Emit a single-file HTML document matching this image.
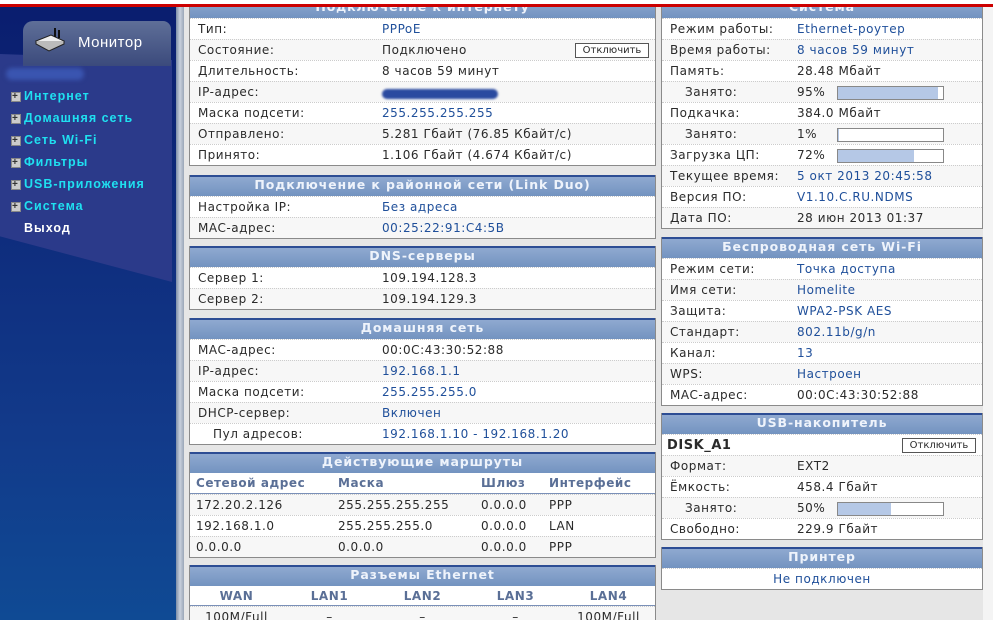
<!DOCTYPE html>
<html><head><meta charset="utf-8"><style>
*{margin:0;padding:0;box-sizing:border-box}
html,body{width:993px;height:620px;overflow:hidden}
body{background:#e6e6e6;font-family:"DejaVu Sans","Liberation Sans",sans-serif;font-size:12px;letter-spacing:.55px;color:#2a2a2a;position:relative}
.side{position:absolute;left:0;top:0;width:176px;height:620px;background:linear-gradient(#0a1d6e,#123a8a 70%,#0f4a94)}
.strip{position:absolute;left:176px;top:0;width:8px;height:620px;background:linear-gradient(90deg,#7d8ea8,#c8d0dc,#9aa6b8)}
.red{position:absolute;left:0;top:0;width:993px;height:7px;background:linear-gradient(#fff 0,#fff 4px,#c00 4px,#c00 7px)}
.tab{position:absolute;left:23px;top:21px;width:148px;height:45px;border-radius:10px 8px 0 0;background:linear-gradient(#5f6f98,#3b4a7c);color:#fff;font:15px "Liberation Sans",sans-serif;letter-spacing:.5px}
.panel{position:absolute;left:0;top:54px;width:172px;height:228px;background:#2b3a8a;border-radius:0 4px 0 0;clip-path:polygon(0 0,100% 6px,100% 100%,0 80%)}
.menu{position:absolute;left:10px;top:88px;font:bold 12.5px "Liberation Sans",sans-serif;letter-spacing:1px;color:#1fe0f0}
.menu div{height:22px;line-height:16px;position:relative;padding-left:14px}
.menu div:before{content:"";position:absolute;left:1px;top:4px;width:8px;height:8px;background:#ccc;border:1px solid #888}
.menu div:after{content:"+";position:absolute;left:2px;top:1px;color:#333;font-size:10px;letter-spacing:0}
.menu .x{color:#fff}.menu .x:before,.menu .x:after{display:none}
.box{position:absolute;background:#fff;border:1px solid #8a8a8a;border-top:none}
.h{height:21px;background:linear-gradient(#2d4d94 0,#2d4d94 2px,#8fa9d0 2px,#7393c0);color:#eef3fb;font-weight:bold;font-size:12.5px;text-align:center;line-height:20px;letter-spacing:.9px}
.r{height:21px;line-height:21px;border-top:1px dotted #ccc;position:relative;padding-left:8px;white-space:nowrap}
.r:nth-child(odd){background:#f7f7f7}
.r span{position:absolute}
.b{color:#1f4f9a}
.bar{position:absolute;width:107px;height:14px;top:4px;border:1px solid #888;background:#fff}
.bar i{display:block;height:100%;background:#b5c8e6}
.btn{position:absolute;right:6px;top:3px;width:74px;height:15px;border:1px solid #555;background:#fff;font-size:10px;letter-spacing:0;text-align:center;line-height:13px}
.th{color:#5a6f96;font-weight:bold;border-bottom:1px solid #7a90b8}
</style></head><body>
<div class="side"></div>
<div class="panel"></div>
<div class="tab"><svg style="position:absolute;left:10px;top:6px" width="34" height="26" viewBox="0 0 34 26"><path d="M3 14 L18 8 L31 14 L16 21 Z" fill="#eee" stroke="#222"/><path d="M3 14 L3 17 L16 24 L31 17 L31 14" fill="#bbb" stroke="#222"/><path d="M22 10 L22 1 M26 11 L26 3" stroke="#111" stroke-width="2"/></svg><span style="position:absolute;left:55px;top:13px">Монитор</span></div>
<div style="position:absolute;left:6px;top:68px;width:78px;height:12px;background:#3a55b0;border-radius:6px;filter:blur(2px)"></div>
<div class="menu"><div>Интернет</div><div>Домашняя сеть</div><div>Сеть Wi-Fi</div><div>Фильтры</div><div>USB-приложения</div><div>Система</div><div class="x">Выход</div></div>
<div class="strip"></div>
<div style="position:absolute;left:983px;top:0;width:10px;height:620px;background:#f4f4f4"></div>

<div class="box" style="left:189px;top:-3px;width:467px"><div class="h">Подключение к интернету</div>
<div class="r">Тип:<span class="b" style="left:192px">PPPoE</span></div>
<div class="r">Состояние:<span style="left:192px">Подключено</span><div class="btn">Отключить</div></div>
<div class="r">Длительность:<span style="left:192px">8 часов 59 минут</span></div>
<div class="r">IP-адрес:<span style="left:192px;top:7px;width:116px;height:10px;background:#2a4aa0;border-radius:5px;filter:blur(1px)"></span></div>
<div class="r">Маска подсети:<span class="b" style="left:192px">255.255.255.255</span></div>
<div class="r">Отправлено:<span style="left:192px">5.281 Гбайт (76.85 Кбайт/с)</span></div>
<div class="r">Принято:<span style="left:192px">1.106 Гбайт (4.674 Кбайт/с)</span></div></div>

<div class="box" style="left:189px;top:175px;width:467px"><div class="h">Подключение к районной сети (Link Duo)</div>
<div class="r">Настройка IP:<span class="b" style="left:192px">Без адреса</span></div>
<div class="r">MAC-адрес:<span class="b" style="left:192px">00:25:22:91:C4:5B</span></div></div>

<div class="box" style="left:189px;top:246px;width:467px"><div class="h">DNS-серверы</div>
<div class="r">Сервер 1:<span style="left:192px">109.194.128.3</span></div>
<div class="r">Сервер 2:<span style="left:192px">109.194.129.3</span></div></div>

<div class="box" style="left:189px;top:318px;width:467px"><div class="h">Домашняя сеть</div>
<div class="r">MAC-адрес:<span style="left:192px">00:0C:43:30:52:88</span></div>
<div class="r">IP-адрес:<span class="b" style="left:192px">192.168.1.1</span></div>
<div class="r">Маска подсети:<span class="b" style="left:192px">255.255.255.0</span></div>
<div class="r">DHCP-сервер:<span class="b" style="left:192px">Включен</span></div>
<div class="r" style="padding-left:23px">Пул адресов:<span class="b" style="left:192px">192.168.1.10 - 192.168.1.20</span></div></div>

<div class="box" style="left:189px;top:452px;width:467px"><div class="h">Действующие маршруты</div>
<div class="r th" style="padding-left:6px;border-top:none;background:#fff">Сетевой адрес<span style="left:148px">Маска</span><span style="left:291px">Шлюз</span><span style="left:359px">Интерфейс</span></div>
<div class="r" style="padding-left:6px">172.20.2.126<span style="left:148px">255.255.255.255</span><span style="left:291px">0.0.0.0</span><span style="left:359px">PPP</span></div>
<div class="r" style="padding-left:6px">192.168.1.0<span style="left:148px">255.255.255.0</span><span style="left:291px">0.0.0.0</span><span style="left:359px">LAN</span></div>
<div class="r" style="padding-left:6px">0.0.0.0<span style="left:148px">0.0.0.0</span><span style="left:291px">0.0.0.0</span><span style="left:359px">PPP</span></div></div>

<div class="box" style="left:189px;top:565px;width:467px;height:70px"><div class="h">Разъемы Ethernet</div>
<div class="r th" style="border-top:none;background:#fff;padding:0;display:flex;height:20px;line-height:20px"><b style="flex:1;text-align:center">WAN</b><b style="flex:1;text-align:center">LAN1</b><b style="flex:1;text-align:center">LAN2</b><b style="flex:1;text-align:center">LAN3</b><b style="flex:1;text-align:center">LAN4</b></div>
<div class="r" style="padding:0;display:flex;background:#f7f7f7"><span style="position:static;flex:1;text-align:center">100M/Full</span><span style="position:static;flex:1;text-align:center">–</span><span style="position:static;flex:1;text-align:center">–</span><span style="position:static;flex:1;text-align:center">–</span><span style="position:static;flex:1;text-align:center">100M/Full</span></div></div>

<div class="box" style="left:661px;top:-3px;width:322px"><div class="h">Система</div>
<div class="r">Режим работы:<span class="b" style="left:135px">Ethernet-роутер</span></div>
<div class="r">Время работы:<span class="b" style="left:135px">8 часов 59 минут</span></div>
<div class="r">Память:<span style="left:135px">28.48 Мбайт</span></div>
<div class="r" style="padding-left:23px">Занято:<span style="left:135px">95%</span><div class="bar" style="left:175px"><i style="width:95%"></i></div></div>
<div class="r">Подкачка:<span style="left:135px">384.0 Мбайт</span></div>
<div class="r" style="padding-left:23px">Занято:<span style="left:135px">1%</span><div class="bar" style="left:175px"><i style="width:1%"></i></div></div>
<div class="r">Загрузка ЦП:<span style="left:135px">72%</span><div class="bar" style="left:175px"><i style="width:72%"></i></div></div>
<div class="r">Текущее время:<span class="b" style="left:135px">5 окт 2013 20:45:58</span></div>
<div class="r">Версия ПО:<span class="b" style="left:135px">V1.10.C.RU.NDMS</span></div>
<div class="r">Дата ПО:<span style="left:135px">28 июн 2013 01:37</span></div></div>

<div class="box" style="left:661px;top:237px;width:322px"><div class="h">Беспроводная сеть Wi-Fi</div>
<div class="r">Режим сети:<span class="b" style="left:135px">Точка доступа</span></div>
<div class="r">Имя сети:<span class="b" style="left:135px">Homelite</span></div>
<div class="r">Защита:<span class="b" style="left:135px">WPA2-PSK AES</span></div>
<div class="r">Стандарт:<span class="b" style="left:135px">802.11b/g/n</span></div>
<div class="r">Канал:<span class="b" style="left:135px">13</span></div>
<div class="r">WPS:<span class="b" style="left:135px">Настроен</span></div>
<div class="r">MAC-адрес:<span style="left:135px">00:0C:43:30:52:88</span></div></div>

<div class="box" style="left:661px;top:413px;width:322px"><div class="h">USB-накопитель</div>
<div class="r" style="font-weight:bold;font-size:13px;padding-left:5px;background:#fff">DISK_A1<div class="btn" style="font-weight:normal">Отключить</div></div>
<div class="r">Формат:<span style="left:135px">EXT2</span></div>
<div class="r">Ёмкость:<span style="left:135px">458.4 Гбайт</span></div>
<div class="r" style="padding-left:23px">Занято:<span style="left:135px">50%</span><div class="bar" style="left:175px"><i style="width:50%"></i></div></div>
<div class="r">Свободно:<span style="left:135px">229.9 Гбайт</span></div></div>

<div class="box" style="left:661px;top:547px;width:322px"><div class="h">Принтер</div>
<div class="r b" style="text-align:center;padding:0;background:#fff">Не подключен</div></div>
<div class="red"></div>
</body></html>
